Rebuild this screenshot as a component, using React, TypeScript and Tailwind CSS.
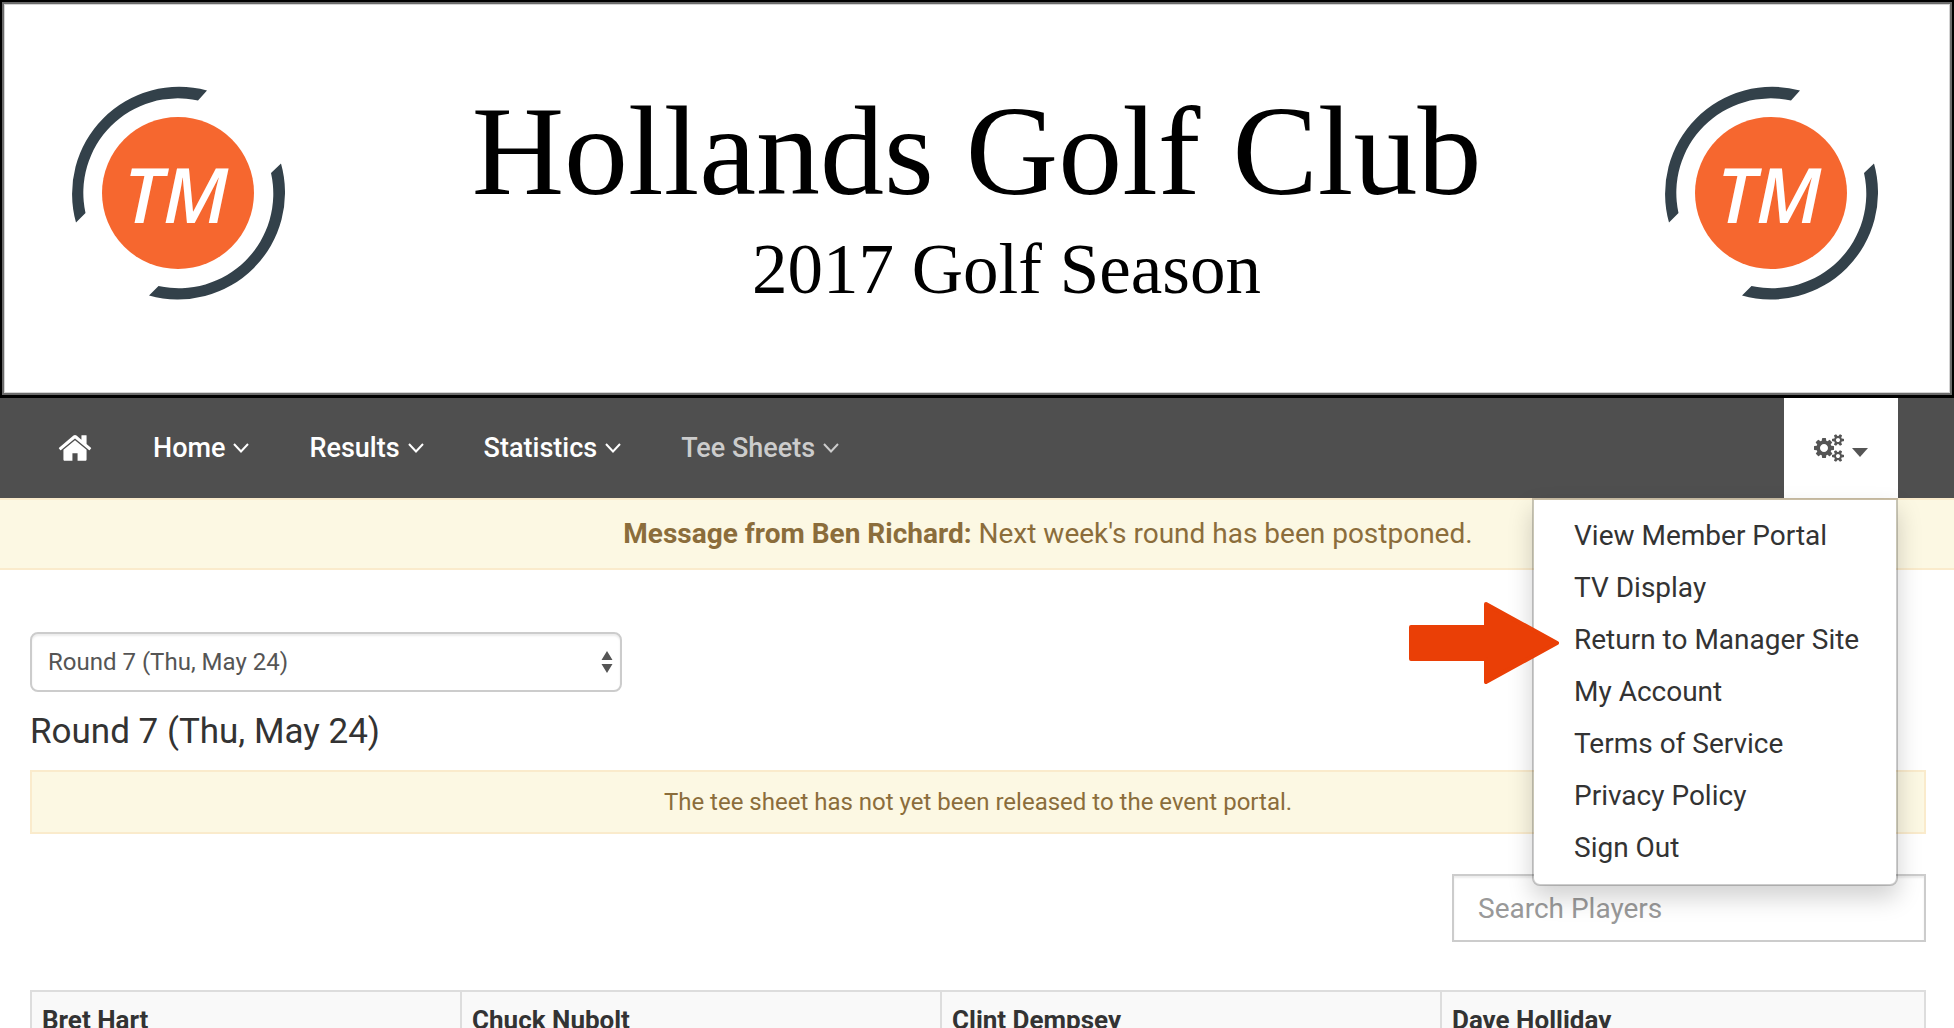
import React from 'react'

const navItems = [
  { name: 'Home', active: false },
  { name: 'Results', active: false },
  { name: 'Statistics', active: false },
  { name: 'Tee Sheets', active: true },
];

const menuItems = [
  'View Member Portal',
  'TV Display',
  'Return to Manager Site',
  'My Account',
  'Terms of Service',
  'Privacy Policy',
  'Sign Out',
];

const Logo = () => (
  <svg viewBox="0 0 214 214" className="w-[214px] h-[214px] shrink-0" role="img" aria-label="TM">
    <path d="M136 4.5A107 107 0 0 0 5 136.500L14.500 127A94.500 94.500 0 0 1 127 14.500Z" fill="#33414a" />
    <path d="M78 209.500A107 107 0 0 0 210 77.500L200 87A94.500 94.500 0 0 1 87.500 200Z" fill="#33414a" />
    <circle cx="107" cy="107" r="76" fill="#f6672f" />
    <text x="105" y="137" textAnchor="middle" fontSize="76" className="font-['Open_Sans',sans-serif] font-semibold italic" fill="#fff">TM</text>
  </svg>
)

const HomeIcon = () => (
  <svg viewBox="0 0 1792 1792" className="w-9 h-9" fill="currentColor" aria-hidden="true">
    <path d="M1472 992v480q0 26-19 45t-45 19h-384v-384h-256v384h-384q-26 0-45-19t-19-45v-480q0-1 .5-3t.5-3l575-474 575 474q1 2 1 6zm223-69l-62 74q-8 9-21 11h-3q-13 0-21-7l-692-577-692 577q-12 8-24 7-13-2-21-11l-62-74q-8-10-7-23.500t11-21.500l719-599q32-26 76-26t76 26l244 204v-195q0-14 9-23t23-9h192q14 0 23 9t9 23v408l219 182q10 8 11 21.500t-7 23.500z" />
  </svg>
)

const smallCog = 'v140q0 16-149 31-12 27-30 52 51 113 51 138 0 4-4 7-122 71-124 71-8 0-46-47t-52-68q-20 2-30 2t-30-2q-14 21-52 68t-46 47q-2 0-124-71-4-3-4-7 0-25 51-138-18-25-30-52-149-15-149-31v-140q0-16 149-31 13-29 30-52-51-113-51-138 0-4 4-7 4-2 35-20t59-34 30-16q8 0 46 46.500t52 67.500q20-2 30-2t30 2q51-71 92-112l6-2q4 0 124 70 4 3 4 7 0 25-51 138 17 23 30 52 149 15 149 31z';

const CogsIcon = () => (
  <svg viewBox="0 0 1920 1792" className="w-[30px] h-7" fill="currentColor" fillRule="evenodd" aria-hidden="true">
    <path d="M896 896q0-106-75-181t-181-75-181 75-75 181 75 181 181 75 181-75 75-181zm384-91v185q0 10-7 19.500t-16 10.500l-155 24q-11 35-32 76 34 48 90 115 7 11 7 20 0 12-7 19-23 30-82.500 89.500t-78.500 59.500q-11 0-21-7l-115-90q-37 19-77 31-11 108-23 155-7 24-30 24h-186q-11 0-20-7.500t-10-17.500l-23-153q-34-10-75-31l-118 89q-7 7-20 7-11 0-21-8-144-133-144-160 0-9 7-19 10-14 41-53t47-61q-23-44-35-82l-152-24q-10-1-17-9.500t-7-19.500v-185q0-10 7-19.500t16-10.500l155-24q11-35 32-76-34-48-90-115-7-11-7-20 0-12 7-20 22-30 82-89t79-59q11 0 21 7l115 90q34-18 77-32 11-108 23-154 7-24 30-24h186q11 0 20 7.500t10 17.500l23 153q34 10 75 31l118-89q8-7 20-7 11 0 21 8 144 133 144 160 0 8-7 19-12 16-42 54t-45 60q23 48 34 82l152 23q10 2 17 10.500t7 19.500z" />
    <path d={'M1664 1408q0-52-38-90t-90-38-90 38-38 90q0 53 37.500 90.500t90.500 37.500 90.500-37.500 37.500-90.500zM1920 1338' + smallCog} />
    <path d={'M1664 384q0-52-38-90t-90-38-90 38-38 90q0 53 37.500 90.500t90.500 37.500 90.500-37.500 37.500-90.500zM1920 314' + smallCog} />
  </svg>
)

const Banner = () => (
  <header className="bg-black p-[2px] pb-[3px]">
    <div className="h-[393px] bg-white border-2 border-[#6b6b6b] shadow-[inset_0_0_0_1px_#d4d4d4] flex items-center justify-between pl-[67px] pr-[72px] pb-3">
      <Logo />
      <div className="text-black text-center font-['Liberation_Serif',serif] pt-3 pl-1">
        <h1 className="text-[128px] leading-[140px]">Hollands Golf Club</h1>
        <p className="text-[71px] leading-[96px] pl-[60px]">2017 Golf Season</p>
      </div>
      <Logo />
    </div>
  </header>
)

const SettingsMenu = () => (
  <div className="relative">
    <button type="button" aria-label="Settings" className="w-[114px] h-[100px] bg-white text-[#555] flex items-center justify-center gap-2">
      <CogsIcon />
      <svg viewBox="0 0 16 9" className="w-4 h-[9px] mt-2" fill="currentColor" aria-hidden="true">
        <path d="M0 0H16L8 9Z" />
      </svg>
    </button>

    <ul className="absolute right-0 top-full z-10 w-[366px] bg-white bg-clip-padding border-2 border-black/20 rounded-b-lg py-[10px] shadow-[0_12px_24px_rgba(0,0,0,0.18)]">
      {menuItems.map((item) => (
        <li key={item} className="relative">
          {item === 'Return to Manager Site' && (
            <svg viewBox="0 0 150 82" className="absolute right-[337px] -top-3 w-[150px] h-[82px]" fill="#ea3f06" stroke="#ea3f06" strokeWidth="4" strokeLinejoin="round">
              <path d="M2 25H77V2L148 41L77 80V57H2Z" />
            </svg>
          )}
          <a href="#" className="block px-10 py-1 leading-[44px] whitespace-nowrap text-[#333]">{item}</a>
        </li>
      ))}
    </ul>
  </div>
)

const NavBar = () => (
  <nav className="h-[100px] bg-[#4f4f4f] text-white flex items-center justify-between pl-[57px] pr-14">
    <div className="flex items-center gap-[60px] text-[27px] font-medium">
      <a href="#" aria-label="Home page"><HomeIcon /></a>
      {navItems.map(({ name, active }) => (
        <a key={name} href="#" className={active ? 'flex items-center gap-2 text-[#ccc]' : 'flex items-center gap-2'}>
          {name}
          <svg viewBox="0 0 16 10" className="w-4 h-[10px]" fill="none" stroke="currentColor" strokeWidth="2" aria-hidden="true">
            <path d="M1 1L8 8.500L15 1" />
          </svg>
        </a>
      ))}
    </div>
    <SettingsMenu />
  </nav>
)

const App = () => {
  return (
    <div className="bg-white text-[28px] leading-10 text-[#333] font-['Roboto',sans-serif]">
      <Banner />
      <NavBar />

      <div className="h-[72px] bg-[#fcf8e3] border-y-2 border-[#faebcc] text-[#8b6d3b] flex items-center justify-center pl-[142px]">
        <p><strong>Message from Ben Richard:</strong> Next week's round has been postponed.</p>
      </div>

      <main className="pl-[30px] pr-7 pt-[62px]">
        <div className="relative w-[592px]">
          <select aria-label="Round" className="w-full h-[60px] appearance-none bg-white border-2 border-[#ccc] rounded-lg px-4 text-[24px] text-[#555] shadow-[inset_0_2px_2px_rgba(0,0,0,0.075)]">
            <option>Round 7 (Thu, May 24)</option>
          </select>
          <svg viewBox="0 0 12 22" className="absolute right-[9px] top-[19px] w-3 h-[22px] pointer-events-none" fill="#555" aria-hidden="true">
            <path d="M6 0L11.500 9H0.500ZM6 22L0.500 13H11.500Z" />
          </svg>
        </div>

        <h2 className="text-[35px] leading-[40px] mt-5">Round 7 (Thu, May 24)</h2>

        <div className="h-16 mt-[18px] bg-[#fcf8e3] border-2 border-[#faebcc] text-[#8b6d3b] text-[24px] flex items-center justify-center">
          The tee sheet has not yet been released to the event portal.
        </div>

        <div className="flex justify-end mt-10">
          <input type="text" aria-label="Search Players" placeholder="Search Players" className="w-[474px] h-[68px] border-2 border-[#ccc] px-6 placeholder:text-[#999] shadow-[inset_0_2px_2px_rgba(0,0,0,0.075)]" />
        </div>

        <table className="w-full mt-12 table-fixed border-collapse text-[26px] text-left bg-[#f9f9f9]">
          <colgroup>
            <col className="w-[430px]" />
            <col className="w-[480px]" />
            <col className="w-[500px]" />
            <col />
          </colgroup>
          <thead>
            <tr>
              {['Bret Hart', 'Chuck Nubolt', 'Clint Dempsey', 'Dave Holliday'].map((player) => (
                <th key={player} className="border-2 border-[#ddd] px-[10px] py-2 font-bold">{player}</th>
              ))}
            </tr>
          </thead>
        </table>
      </main>
    </div>
  )
}

export default App
